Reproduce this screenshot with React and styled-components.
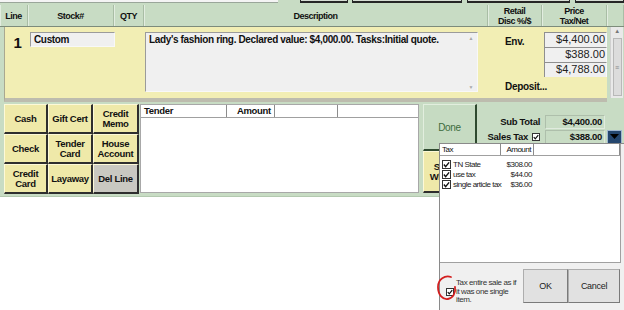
import React from "react";
import styled, { createGlobalStyle } from "styled-components";

const GlobalStyle = createGlobalStyle`
  html, body { margin: 0; padding: 0; background: #ffffff; }
  body { font-family: "Liberation Sans", Arial, sans-serif; color: #111; letter-spacing: -0.3px; }
  * { box-sizing: border-box; }
`;

const Page = styled.div`
  position: relative;
  width: 624px;
  height: 310px;
  overflow: hidden;
  background: #fff;
`;

const Window = styled.div`
  height: 197px;
  background: #c8dcc4;
  display: flex;
  flex-direction: column;
  border-bottom: 1px solid #b3c9af;
`;

const TopStrip = styled.div`
  display: flex;
  height: 5px;
`;

const TopInput = styled.div`
  width: 278px;
  height: 3px;
  background: #f4f4f4;
  border-bottom: 1px solid #9aa69a;
`;

const TopButton = styled.div`
  width: ${(p) => p.w}px;
  margin-left: ${(p) => p.ml}px;
  height: 3px;
  background: #d6ddd4;
  border: 1px solid #262626;
  border-top: none;
  border-bottom-width: 2px;
`;

const Header = styled.div`
  display: grid;
  grid-template-columns: 28px 86px 30px 344px 54px 65px 1fr;
  height: 22px;
  border-bottom: 1px solid #7d8c7b;
`;

const HeadCell = styled.div`
  display: flex;
  align-items: center;
  justify-content: center;
  text-align: center;
  font-weight: bold;
  font-size: 9px;
  letter-spacing: -0.5px;
  line-height: 10px;
  border-right: 1px solid #a9bda5;
  box-shadow: inset 1px 0 0 #e2ede0;
`;

const RowWrap = styled.div`
  display: flex;
  padding-left: 4px;
  height: 75px;
`;

const LinePanel = styled.div`
  width: 603px;
  height: 75px;
  background: #f2eeb4;
  border-left: 1px solid #a9a890;
  border-bottom: 4px solid #bdbcae;
  display: grid;
  grid-template-columns: 25px 86px 29px 334px 65px 63px;
  padding-top: 5px;
`;

const LineNo = styled.div`
  font-weight: bold;
  font-size: 15px;
  text-align: center;
  padding-top: 2px;
`;

const Field = styled.div`
  width: ${(p) => p.w}px;
  height: ${(p) => p.h}px;
  background: #f0f0f0;
  border: 1px solid #9b9b9b;
  border-right-color: #f8f8f8;
  border-bottom-color: #f8f8f8;
  font-weight: bold;
  font-size: 10px;
  letter-spacing: -0.35px;
  padding: 1px 3px;
  position: relative;
`;

const ScrollArrow = styled.span`
  position: absolute;
  right: 4px;
  ${(p) => (p.down ? "bottom: 1px;" : "top: 2px;")}
  font-size: 5px;
  color: #a8a8a8;
`;

const SideCol = styled.div`
  display: flex;
  flex-direction: column;
  justify-content: space-between;
  padding: 4px 0 2px 26px;
  height: 62px;
  font-weight: bold;
  font-size: 10px;
`;

const PriceCol = styled.div`
  display: flex;
  flex-direction: column;
`;

const PriceBox = styled.div`
  width: 63px;
  height: 15px;
  background: #f0f0f0;
  border: 1px solid #8f8f8f;
  border-right-color: #f8f8f8;
  border-bottom: none;
  font-size: 11px;
  letter-spacing: 0;
  line-height: 13px;
  text-align: right;
  padding-right: 1px;
  color: #222;
`;

const Scrollbar = styled.div`
  width: 13px;
  height: 71px;
  margin-left: 3px;
  background: #e9e9e9;
  border-left: 1px solid #d0d0d0;
  display: flex;
  flex-direction: column;
  align-items: center;
`;

const ScrollUp = styled.span`
  font-size: 6px;
  color: #777;
  line-height: 9px;
`;

const ScrollThumb = styled.div`
  width: 9px;
  flex: 1;
  margin: 2px 0;
  background: #dcdcdc;
  border: 1px solid #b8b8b8;
  display: flex;
  align-items: center;
  justify-content: center;
  font-size: 7px;
  color: #888;
`;

const Bottom = styled.div`
  display: flex;
  padding: 2px 0 0 4px;
`;

const ButtonGrid = styled.div`
  display: grid;
  grid-template-columns: 44px 45px 46px;
  grid-template-rows: repeat(3, 30px);
`;

const PadButton = styled.div`
  display: flex;
  align-items: center;
  justify-content: center;
  text-align: center;
  background: ${(p) => (p.gray ? "#c9c8c1" : "#efe9a9")};
  border-top: 1px solid #fdf9d8;
  border-left: 1px solid #fdf9d8;
  border-right: 2px solid #2e2e2e;
  border-bottom: 2px solid #2e2e2e;
  font-weight: bold;
  font-size: 9.5px;
  line-height: 10px;
  white-space: nowrap;
`;

const TenderList = styled.div`
  width: 279px;
  height: 89px;
  margin-left: 1px;
  background: #fff;
  border: 1px solid #a8a8a8;
`;

const ListHead = styled.div`
  display: grid;
  grid-template-columns: ${(p) => p.cols};
  height: ${(p) => p.h}px;
  border-bottom: 1px solid #a0a0a0;
`;

const ListHeadCell = styled.div`
  border-right: 1px solid #8c8c8c;
  font-weight: ${(p) => (p.light ? "normal" : "bold")};
  font-size: ${(p) => (p.light ? 8 : 9.5)}px;
  letter-spacing: ${(p) => (p.light ? -0.5 : -0.3)}px;
  line-height: ${(p) => p.lh}px;
  padding: 0 ${(p) => (p.light ? 2 : 3)}px;
  text-align: ${(p) => (p.right ? "right" : "left")};
  white-space: nowrap;
  overflow: hidden;
`;

const DoneCol = styled.div`
  width: 54px;
  margin-left: 4px;
  display: flex;
  flex-direction: column;
`;

const DoneButton = styled.div`
  height: 47px;
  display: flex;
  align-items: center;
  justify-content: center;
  background: #c6dbc2;
  border-left: 1px solid #e2eede;
  border-top: 1px solid #e2eede;
  border-right: 2px solid #2f4a2f;
  border-bottom: 2px solid #2f4a2f;
  color: #3d6b3d;
  font-size: 10px;
`;

const SaveButton = styled(PadButton)`
  height: 42px;
`;

const Totals = styled.div`
  flex: 1;
  display: flex;
  flex-direction: column;
  padding-top: 10px;
`;

const TotalRow = styled.div`
  display: flex;
  justify-content: flex-end;
  align-items: center;
  height: 15px;
  gap: 5px;
  font-weight: bold;
  font-size: 9.5px;
`;

const TotalLabel = styled.span`
  display: flex;
  align-items: center;
  gap: 4px;
`;

const TotalBox = styled.div`
  width: 60px;
  height: 14px;
  border: 1px solid #e0ebde;
  border-left-color: #aebfab;
  border-top-color: #aebfab;
  text-align: right;
  padding-right: 2px;
  line-height: 12px;
`;

const DropButton = styled.div`
  width: 15px;
  height: 14px;
  margin-left: -3px;
  margin-right: 2px;
  background: #24466e;
  border: 1px solid #9fb6d0;
  display: flex;
  align-items: center;
  justify-content: center;
  visibility: ${(p) => (p.hidden ? "hidden" : "visible")};
`;

const Check = styled.span`
  display: inline-flex;
  align-items: center;
  justify-content: center;
  width: ${(p) => p.s}px;
  height: ${(p) => p.s}px;
  background: #fff;
  border: 1px solid #333;
  flex: none;
`;

const Popup = styled.div`
  position: absolute;
  left: 439px;
  top: 143px;
  width: 186px;
  height: 168px;
  background: #f0f0f0;
  border-left: 1px solid #8a8a8a;
  border-top: 1px solid #8a8a8a;
  display: flex;
  flex-direction: column;
`;

const PopList = styled.div`
  height: 119px;
  width: 181px;
  background: #fff;
  border: 1px solid #a0a0a0;
  border-top: none;
  border-left: none;
`;

const PopRows = styled.div`
  padding-top: 3px;
  display: flex;
  flex-direction: column;
`;

const PopRow = styled.div`
  display: grid;
  grid-template-columns: 61px 31px;
  height: 10px;
  align-items: center;
  font-size: 8px;
  line-height: 9px;
  letter-spacing: -0.5px;
  color: #222;
`;

const PopName = styled.div`
  display: flex;
  align-items: center;
  gap: 2px;
  padding-left: 2px;
  white-space: nowrap;
`;

const PopAmount = styled.div`
  text-align: right;
`;

const PopFooter = styled.div`
  display: flex;
  flex: 1;
  position: relative;
`;

const FooterLabel = styled.div`
  width: 83px;
  display: flex;
  align-items: center;
  gap: 2px;
  padding: 10px 0 0 6px;
  font-size: 8px;
  letter-spacing: -0.4px;
  line-height: 8.5px;
  color: #333;
  white-space: nowrap;
`;

const DialogButton = styled.div`
  width: ${(p) => p.w}px;
  height: 34px;
  margin-top: 6px;
  background: #e1e1e1;
  border: 1px solid #adadad;
  border-right-color: #7a7a7a;
  border-bottom-color: #7a7a7a;
  display: flex;
  align-items: center;
  justify-content: center;
  font-size: 9px;
  color: #222;
`;

const RedMark = styled.svg`
  position: absolute;
  left: -4px;
  top: 11px;
`;

const CheckMark = ({ s = 8 }) => (
  <Check s={s}>
    <svg width={s - 2} height={s - 2} viewBox="0 0 8 8">
      <polyline points="1,4 3,6.5 7,1.5" fill="none" stroke="#111" strokeWidth="1.6" />
    </svg>
  </Check>
);

const taxes = [
  ["TN State", "$308.00"],
  ["use tax", "$44.00"],
  ["single article tax", "$36.00"],
];

export default function App() {
  return (
    <Page>
      <GlobalStyle />
      <Window>
        <TopStrip>
          <TopInput />
          <TopButton w={48} ml={22} />
          <TopButton w={110} ml={4} />
          <TopButton w={103} ml={5} />
          <TopButton w={49} ml={5} />
        </TopStrip>
        <Header>
          <HeadCell>Line</HeadCell>
          <HeadCell>Stock#</HeadCell>
          <HeadCell>QTY</HeadCell>
          <HeadCell>Description</HeadCell>
          <HeadCell>Retail<br />Disc %/$</HeadCell>
          <HeadCell>Price<br />Tax/Net</HeadCell>
          <HeadCell />
        </Header>
        <RowWrap>
          <LinePanel>
            <LineNo>1</LineNo>
            <div>
              <Field w={85} h={15}>Custom</Field>
            </div>
            <div />
            <Field w={333} h={60}>
              Lady's fashion ring. Declared value: $4,000.00. Tasks:Initial quote.
              <ScrollArrow>▲</ScrollArrow>
              <ScrollArrow down>▼</ScrollArrow>
            </Field>
            <SideCol>
              <span>Env.</span>
              <span>Deposit...</span>
            </SideCol>
            <PriceCol>
              <PriceBox>$4,400.00</PriceBox>
              <PriceBox>$388.00</PriceBox>
              <PriceBox>$4,788.00</PriceBox>
            </PriceCol>
          </LinePanel>
          <Scrollbar>
            <ScrollUp>▲</ScrollUp>
            <ScrollThumb>≡</ScrollThumb>
          </Scrollbar>
        </RowWrap>
        <Bottom>
          <ButtonGrid>
            <PadButton>Cash</PadButton>
            <PadButton>Gift Cert</PadButton>
            <PadButton>Credit<br />Memo</PadButton>
            <PadButton>Check</PadButton>
            <PadButton>Tender<br />Card</PadButton>
            <PadButton>House<br />Account</PadButton>
            <PadButton>Credit<br />Card</PadButton>
            <PadButton>Layaway</PadButton>
            <PadButton gray>Del Line</PadButton>
          </ButtonGrid>
          <TenderList>
            <ListHead cols="86px 48px 63px" h={13}>
              <ListHeadCell lh={11}>Tender</ListHeadCell>
              <ListHeadCell lh={11} right>Amount</ListHeadCell>
              <ListHeadCell lh={11} />
            </ListHead>
          </TenderList>
          <DoneCol>
            <DoneButton>Done</DoneButton>
            <SaveButton>Save to<br />Wish List</SaveButton>
          </DoneCol>
          <Totals>
            <TotalRow>
              <span>Sub Total</span>
              <TotalBox>$4,400.00</TotalBox>
              <DropButton hidden />
            </TotalRow>
            <TotalRow>
              <TotalLabel>
                Sales Tax <CheckMark s={8} />
              </TotalLabel>
              <TotalBox>$388.00</TotalBox>
              <DropButton>
                <svg width="9" height="6" viewBox="0 0 9 6">
                  <polygon points="0,0 9,0 4.5,5" fill="#000" />
                </svg>
              </DropButton>
            </TotalRow>
          </Totals>
        </Bottom>
      </Window>

      <Popup>
        <PopList>
          <ListHead cols="61px 33px 1fr" h={12}>
            <ListHeadCell light lh={11}>Tax</ListHeadCell>
            <ListHeadCell light right lh={11}>Amount</ListHeadCell>
            <ListHeadCell light lh={11} />
          </ListHead>
          <PopRows>
            {taxes.map(([name, amount]) => (
              <PopRow key={name}>
                <PopName>
                  <CheckMark s={9} />
                  {name}
                </PopName>
                <PopAmount>{amount}</PopAmount>
              </PopRow>
            ))}
          </PopRows>
        </PopList>
        <PopFooter>
          <FooterLabel>
            <CheckMark s={8} />
            <span>
              Tax entire sale as if
              <br />
              it was one single
              <br />
              item.
            </span>
          </FooterLabel>
          <DialogButton w={45}>OK</DialogButton>
          <DialogButton w={52}>Cancel</DialogButton>
          <RedMark width="22" height="28" viewBox="0 0 22 28">
            <path
              d="M15 3 C9 1 2 5 2 13 C2 21 7 26 12 25 C17 24 20 19 19 13"
              fill="none"
              stroke="#d31f1f"
              strokeWidth="1.8"
              strokeLinecap="round"
            />
          </RedMark>
        </PopFooter>
      </Popup>
    </Page>
  );
}
